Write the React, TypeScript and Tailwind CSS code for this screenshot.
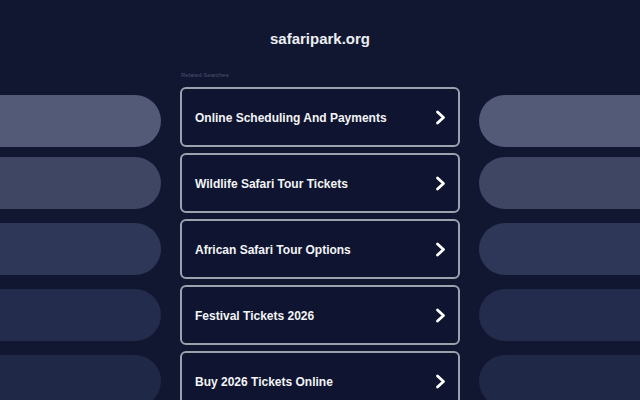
const links = [
  'Online Scheduling And Payments',
  'Wildlife Safari Tour Tickets',
  'African Safari Tour Options',
  'Festival Tickets 2026',
  'Buy 2026 Tickets Online',
];

const pills = [
  { color: 'bg-[#525a78]', top: 'mt-[95px]' },
  { color: 'bg-[#3f4664]', top: 'mt-[10px]' },
  { color: 'bg-[#2f3758]', top: 'mt-[14px]' },
  { color: 'bg-[#242c4d]', top: 'mt-[14px]' },
  { color: 'bg-[#202848]', top: 'mt-[14px]' },
];

function SideColumn({ side }: { side: 'left' | 'right' }) {
  return (
    <div className="flex flex-col w-[161px] shrink-0">
      {pills.map((p) => (
        <div
          key={p.color}
          className={`${p.top} h-[52px] shrink-0 ${p.color} ${
            side === 'left' ? 'rounded-r-[26px]' : 'rounded-l-[26px]'
          }`}
        />
      ))}
    </div>
  );
}

function Chevron() {
  return (
    <svg width="12" height="15" viewBox="0 0 12 15" fill="none" className="text-white">
      <path
        d="M2.5 2 L8.5 7.5 L2.5 13"
        stroke="currentColor"
        strokeWidth="2.8"
        strokeLinecap="round"
        strokeLinejoin="round"
      />
    </svg>
  );
}

export default function App() {
  return (
    <div
      className="h-[400px] w-[640px] overflow-hidden bg-[#111731] text-white"
      style={{ fontFamily: '"Liberation Sans", Arial, sans-serif' }}
    >
      <div className="h-0">
        <h1 className="pt-[30px] text-center text-[15px] font-bold leading-[18px] text-[#eceef3]">
          safaripark.org
        </h1>
      </div>
      <div className="flex justify-between">
        <SideColumn side="left" />
        <div className="flex w-[280px] flex-col pt-[71px]">
          <div className="mb-[7px] pl-px text-[6px] leading-[9px] text-[#4b5270]">
            Related Searches
          </div>
          <div className="flex flex-col gap-[6px]">
            {links.map((l) => (
              <div
                key={l}
                className="flex h-[60px] shrink-0 items-center justify-between rounded-[6px] border-2 border-[#9da1ae] bg-[#0f1530] pl-[13px] pr-[11px]"
              >
                <span className="pt-px text-[12px] font-bold text-[#f3f4f7]">{l}</span>
                <Chevron />
              </div>
            ))}
          </div>
        </div>
        <SideColumn side="right" />
      </div>
    </div>
  );
}
